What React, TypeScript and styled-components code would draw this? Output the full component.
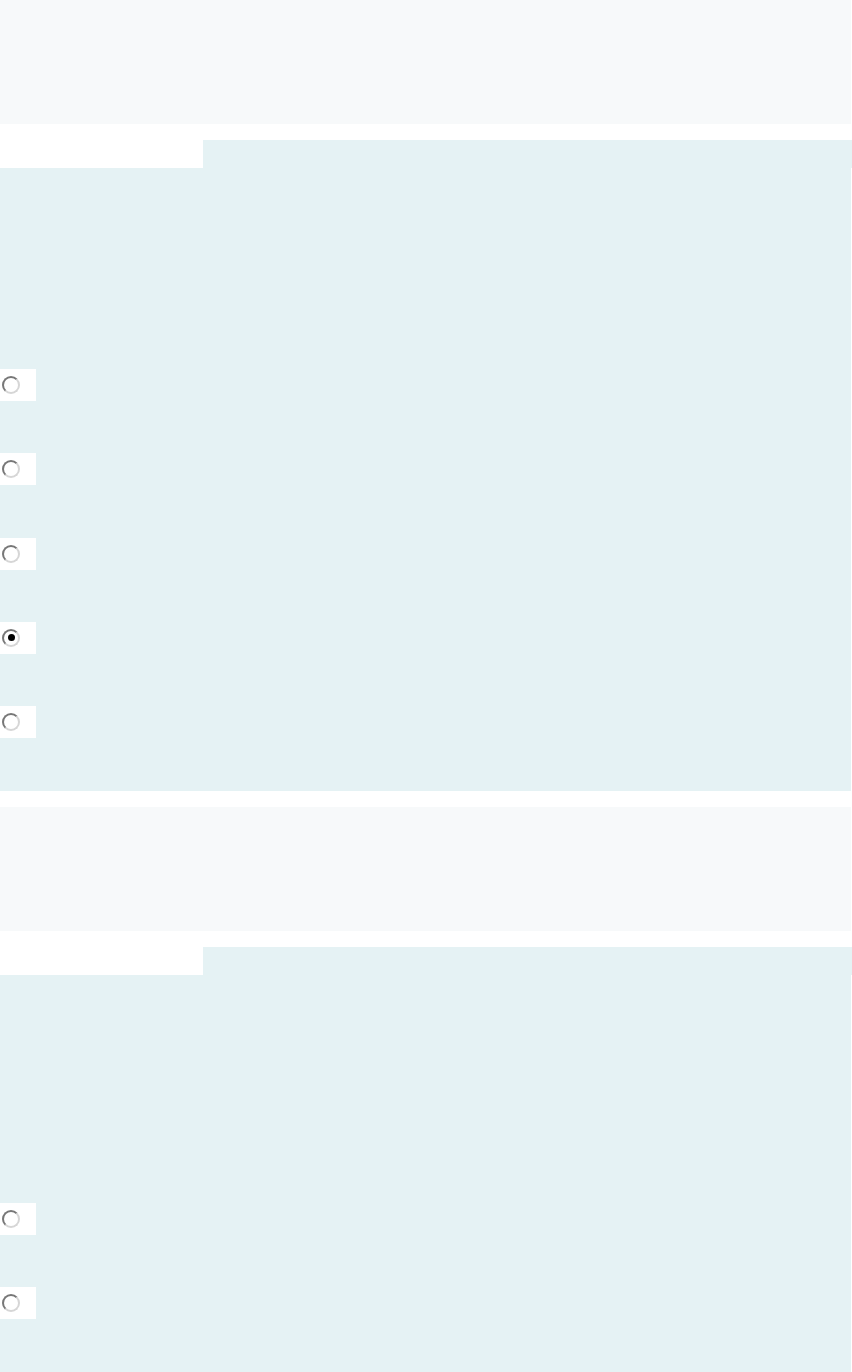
import styled, { createGlobalStyle } from 'styled-components';

const GlobalStyle = createGlobalStyle`
  html, body {
    margin: 0;
    padding: 0;
    background: #ffffff;
    font-family: "Liberation Sans", Arial, sans-serif;
  }
`;

type Question = {
  id: number;
  promptHeight: number;
  options: number;
  selected: number | null;
};

const questions: Question[] = [
  { id: 1, promptHeight: 201, options: 5, selected: 3 },
  { id: 2, promptHeight: 228, options: 5, selected: null },
];

function App() {
  return (
    <>
      <GlobalStyle />
      <Page>
        {questions.map((q) => (
          <QuestionBlock key={q.id}>
            <QuestionHeader />
            <AnswerPanel>
              <TabRow>
                <Tab />
              </TabRow>
              <Prompt $height={q.promptHeight} />
              <OptionList>
                {[...Array(q.options)].map((_, index) => (
                  <OptionRow key={index}>
                    <RadioCell>
                      <Radio
                        type="radio"
                        name={`question-${q.id}`}
                        defaultChecked={q.selected === index}
                        aria-label={`option ${index + 1}`}
                      />
                    </RadioCell>
                    <OptionLabel />
                  </OptionRow>
                ))}
              </OptionList>
            </AnswerPanel>
          </QuestionBlock>
        ))}
      </Page>
    </>
  );
}

export default App;

const Page = styled.main`
  display: flex;
  flex-direction: column;
  gap: 16px;
  padding-right: 1px;
`;

const QuestionBlock = styled.section`
  display: flex;
  flex-direction: column;
  gap: 16px;
`;

const QuestionHeader = styled.div`
  height: 124px;
  background: #f7f9fa;
`;

const AnswerPanel = styled.div`
  background: #e5f2f4;
  padding-bottom: 53px;
  display: flex;
  flex-direction: column;
`;

const TabRow = styled.div`
  display: flex;
  height: 28px;
  margin-right: -1px;
  background: #e5f2f4;
`;

const Tab = styled.div`
  width: 203px;
  height: 100%;
  background: #ffffff;
`;

const Prompt = styled.div<{ $height: number }>`
  height: ${({ $height }) => $height}px;
`;

const OptionList = styled.div`
  display: flex;
  flex-direction: column;
  gap: 52.25px;
`;

const OptionRow = styled.label`
  display: flex;
  align-items: center;
  height: 32px;
`;

const RadioCell = styled.div`
  width: 36px;
  height: 32px;
  background: #ffffff;
  display: flex;
  align-items: center;
  box-sizing: border-box;
  padding-left: 2px;
`;

const Radio = styled.input`
  appearance: none;
  -webkit-appearance: none;
  margin: 0;
  width: 18px;
  height: 18px;
  border-radius: 50%;
  box-sizing: border-box;
  border: 2px solid;
  border-color: #777777 #d6d6d6 #d6d6d6 #777777;
  background: #ffffff;
  display: grid;
  place-items: center;
  cursor: pointer;

  &:checked::after {
    content: '';
    width: 7px;
    height: 7px;
    border-radius: 50%;
    background: #000000;
  }
`;

const OptionLabel = styled.span`
  flex: 1;
`;
